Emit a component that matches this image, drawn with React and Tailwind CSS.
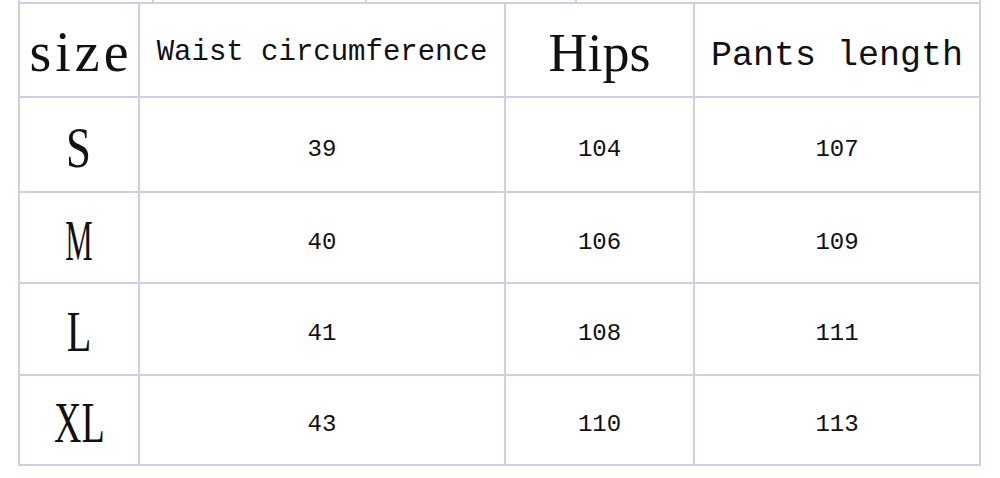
import React from 'react';

const rows = [
  { size: 'S', scale: 'scale-x-[0.8]', waist: '39', hips: '104', length: '107', h: 'h-[93px]' },
  { size: 'M', scale: 'scale-x-[0.55]', waist: '40', hips: '106', length: '109', h: 'h-[89px]' },
  { size: 'L', scale: 'scale-x-[0.72]', waist: '41', hips: '108', length: '111', h: 'h-[90px]' },
  { size: 'XL', scale: 'scale-x-[0.68]', waist: '43', hips: '110', length: '113', h: 'h-[88px]' },
];

const serif = { fontFamily: '"Liberation Serif", "Times New Roman", serif' };
const mono = { fontFamily: '"Liberation Mono", "Courier New", monospace' };

const Cell = ({ className = '', children, style }) => (
  <div className={`bg-white flex items-center justify-center text-[#111] ${className}`} style={style}>
    {children}
  </div>
);

export default function App() {
  return (
    <div className="w-[1000px] h-[478px] bg-white flex flex-col overflow-hidden">
      {/* sliver of the table row above */}
      <div className="flex h-[2px] ml-[18px] w-[963px]">
        <div className="w-[2px] bg-[#cbd0e3]" />
        <div className="w-[132px]" />
        <div className="w-[2px] bg-[#cbd0e3]" />
        <div className="w-[211px]" />
        <div className="w-[2px] bg-[#cbd0e3]" />
        <div className="w-[208px]" />
        <div className="w-[2px] bg-[#cbd0e3]" />
        <div className="w-[402px]" />
        <div className="w-[2px] bg-[#cbd0e3]" />
      </div>

      <div className="ml-[18px] w-[963px] bg-[#cbd0e3] p-[2px] grid grid-cols-[118px_364px_187px_284px] gap-[2px]">
        {/* header */}
        <Cell className="h-[92px] text-[56px] leading-none pt-[4px] pl-[4px] tracking-[4px] font-light" style={serif}>size</Cell>
        <Cell className="h-[92px] text-[29px] leading-none pt-[4px]" style={mono}>Waist circumference</Cell>
        <Cell className="h-[92px] text-[54px] leading-none pt-[6px]" style={serif}>Hips</Cell>
        <Cell className="h-[92px] text-[35px] leading-none pt-[12px]" style={mono}>Pants length</Cell>

        {rows.map(r => (
          <React.Fragment key={r.size}>
            <Cell className={`${r.h} text-[56px] leading-none pt-[6px]`} style={serif}>
              <span className={`inline-block ${r.scale}`}>{r.size}</span>
            </Cell>
            <Cell className={`${r.h} text-[24px] leading-none pt-[10px]`} style={mono}>{r.waist}</Cell>
            <Cell className={`${r.h} text-[24px] leading-none pt-[10px]`} style={mono}>{r.hips}</Cell>
            <Cell className={`${r.h} text-[24px] leading-none pt-[10px]`} style={mono}>{r.length}</Cell>
          </React.Fragment>
        ))}
      </div>
    </div>
  );
}
